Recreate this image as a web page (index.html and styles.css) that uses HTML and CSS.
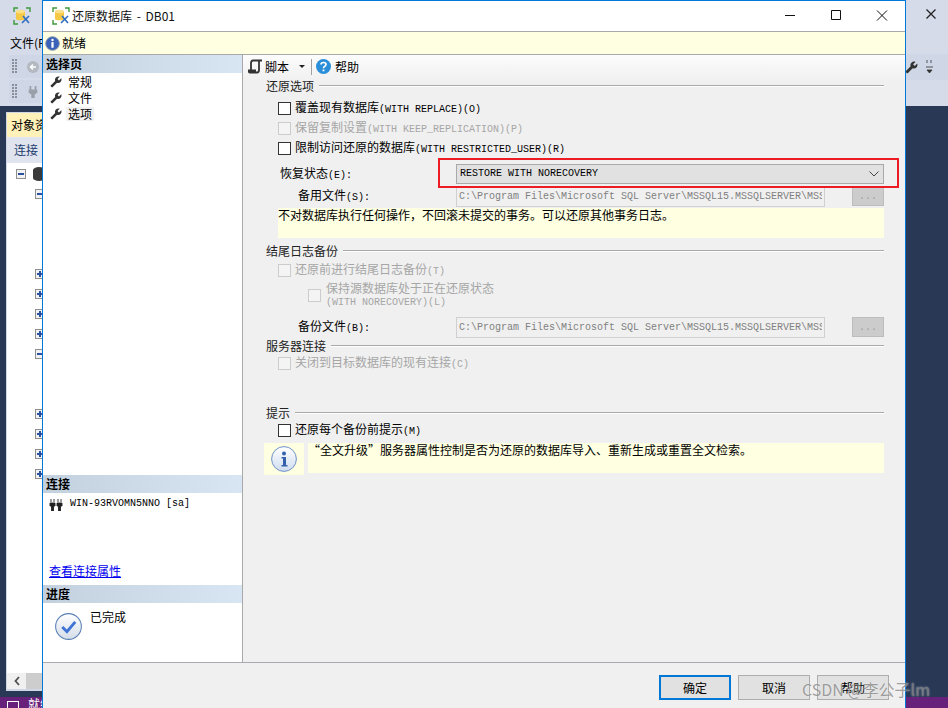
FILE: index.html
```html
<!DOCTYPE html>
<html lang="zh-CN">
<head>
    <meta charset="UTF-8">
    <meta name="viewport" content="width=device-width, initial-scale=1.0">
    <title>还原数据库 - DB01</title>
    <link rel="stylesheet" href="styles.css">
</head>
<body>
    <svg class="defs" width="0" height="0">
        <symbol id="wrench" viewBox="0 0 24 24">
            <path transform="translate(24 0) scale(-1 1)" d="M22.7 19l-9.1-9.1c.9-2.3.4-5-1.5-6.9-2-2-5-2.4-7.4-1.3L9 6 6 9 1.6 4.7C.4 7.1.9 10.1 2.9 12.1c1.9 1.9 4.6 2.4 6.9 1.5l9.1 9.1c.4.4 1 .4 1.4 0l2.3-2.3c.5-.4.5-1.1.1-1.4z"/>
        </symbol>
        <symbol id="logo" viewBox="0 0 18 18">
            <path d="M1 5V1h4M13 1h4v4M1 13v4h4" fill="none" stroke="#3a9a3a" stroke-width="1.4"/>
            <path d="M3 4.500C3 2.800 12 2.800 12 4.500V12C12 13.700 3 13.700 3 12z" fill="#f6c945"/>
            <ellipse cx="7.500" cy="4.500" rx="4.500" ry="1.800" fill="#fbe08a"/>
            <path d="M9 16l7-7M10 9l6 7" stroke="#2f6fc0" stroke-width="1.600"/>
        </symbol>
    </svg>

    <!-- main window behind the dialog -->
    <div class="app">
        <div class="app-top">
            <div class="app-title">
                <svg class="app-logo"><use href="#logo"/></svg>
                <svg class="app-close" viewBox="0 0 10 10"><path d="M0.500 0.500l9 9M9.500 0.500l-9 9"/></svg>
            </div>
            <div class="app-menu">文件(F)</div>
            <div class="app-bar">
                <div class="tile">
                    <span class="grip"></span>
                    <svg class="tile-icon" viewBox="0 0 12 12"><circle cx="6" cy="6" r="6" fill="#b4b8c0"/><path d="M9 6H3.500M6 3.500L3.500 6 6 8.500" fill="none" stroke="#fff" stroke-width="1.500"/></svg>
                </div>
                <div class="tile-right">
                    <svg class="tile-wrench"><use href="#wrench"/></svg>
                    <svg class="tile-more" viewBox="0 0 7 16"><path d="M1 1v3M5 1v3M0 8h7M1 11h5l-2.500 3z" fill="#333" stroke="#333" stroke-width="0.800"/></svg>
                </div>
            </div>
            <div class="app-bar">
                <div class="tile">
                    <span class="grip"></span>
                    <svg class="tile-icon" viewBox="0 0 12 14"><path d="M2 0h2v4h4V0h2v4h1v4l-3 2v4H4v-4L1 8V4h1z" fill="#9aa0aa"/></svg>
                </div>
            </div>
        </div>
        <div class="app-body">
            <div class="explorer">
                <div class="explorer-tab">对象资源管理器</div>
                <div class="explorer-tools">连接</div>
                <div class="tree">
                    <div class="tree-row root"><span class="exp minus"></span><span class="db-icon"></span></div>
                    <div class="tree-row"><span class="exp minus"></span></div>
                    <div class="tree-row"></div>
                    <div class="tree-row"></div>
                    <div class="tree-row"></div>
                    <div class="tree-row"><span class="exp plus"></span></div>
                    <div class="tree-row"><span class="exp plus"></span></div>
                    <div class="tree-row"><span class="exp plus"></span></div>
                    <div class="tree-row"><span class="exp plus"></span></div>
                    <div class="tree-row"><span class="exp minus"></span></div>
                    <div class="tree-row"></div>
                    <div class="tree-row"></div>
                    <div class="tree-row"><span class="exp plus"></span></div>
                    <div class="tree-row"><span class="exp plus"></span></div>
                    <div class="tree-row"><span class="exp plus"></span></div>
                    <div class="tree-row"><span class="exp plus"></span></div>
                </div>
                <div class="hscroll">
                    <svg class="hscroll-arrow" viewBox="0 0 6 10"><path d="M5 1L1.500 5 5 9" fill="none" stroke="#505050" stroke-width="1.800"/></svg>
                    <span class="hscroll-thumb"></span>
                </div>
            </div>
        </div>
        <div class="app-status"><span class="status-box"></span>就绪</div>
    </div>

    <!-- restore dialog -->
    <div class="dialog">
        <div class="titlebar">
            <svg class="title-logo"><use href="#logo"/></svg>
            <span class="title-text">还原数据库 - DB01</span>
            <div class="win-btns">
                <svg class="win-btn" viewBox="0 0 46 30"><path d="M18 14.500h10"/></svg>
                <svg class="win-btn" viewBox="0 0 46 30"><path d="M18.500 9.500h9v9h-9z"/></svg>
                <svg class="win-btn" viewBox="0 0 46 30"><path d="M18 9.500l10 10M28 9.500l-10 10"/></svg>
            </div>
        </div>
        <div class="infobar">
            <svg class="info-small" viewBox="0 0 16 16">
                <circle cx="8" cy="8" r="7.300" fill="#3a62b8" stroke="#8a97ad" stroke-width="1"/>
                <circle cx="8" cy="4.200" r="1.300" fill="#fff"/>
                <rect x="6.800" y="6.500" width="2.400" height="6" fill="#fff"/>
            </svg>
            <span>就绪</span>
        </div>

        <div class="dialog-body">
            <div class="side">
                <div class="side-sec pages">
                    <div class="side-head">选择页</div>
                    <div class="page-list">
                        <div class="page-item"><svg class="wrench"><use href="#wrench"/></svg><span>常规</span></div>
                        <div class="page-item"><svg class="wrench"><use href="#wrench"/></svg><span>文件</span></div>
                        <div class="page-item"><svg class="wrench"><use href="#wrench"/></svg><span class="active">选项</span></div>
                    </div>
                </div>
                <div class="side-sec conn">
                    <div class="side-head">连接</div>
                    <div class="conn-row">
                        <svg class="plug" viewBox="0 0 14 14"><path d="M1 6h5v3H4.500v5h-2V9H1zM8 6h5v3h-1.500v5h-2V9H8zM2 2v3M5 2v3M9 2v3M12 2v3" fill="#222" stroke="#222" stroke-width="0.900"/></svg>
                        <span class="mono">WIN-93RVOMN5NNO [sa]</span>
                    </div>
                    <a class="conn-link" href="#">查看连接属性</a>
                </div>
                <div class="side-sec progress">
                    <div class="side-head">进度</div>
                    <div class="progress-row">
                        <svg class="done-icon" viewBox="0 0 26 26">
                            <defs><linearGradient id="discfill" x1="0" y1="0" x2="0" y2="1"><stop offset="0" stop-color="#fff"/><stop offset="1" stop-color="#d4dde8"/></linearGradient></defs>
                            <circle cx="13" cy="13" r="12.400" fill="url(#discfill)" stroke="#5a7fb5" stroke-width="1"/>
                            <path d="M7 13.500l4.500 4.500L19.500 8.500" fill="none" stroke="#3f73d6" stroke-width="2.800"/>
                        </svg>
                        <span>已完成</span>
                    </div>
                </div>
            </div>

            <div class="pane">
                <div class="toolbar">
                    <svg class="tool-icon" viewBox="0 0 15 15"><path d="M5 1.500h9M5 1.500C3.500 1.500 3 2.500 3 4v7M11 1.500V11c0 1.500-.5 2.500-2 2.500H2C1 13.500 .5 12.800 .5 11.500H8" fill="none" stroke="#333" stroke-width="1.800"/></svg>
                    <span>脚本</span>
                    <span class="caret"></span>
                    <span class="tool-sep"></span>
                    <svg class="tool-icon help" viewBox="0 0 15 15"><circle cx="7.500" cy="7.500" r="7.500" fill="#2a8fd8"/><path d="M5 5.500C5 2.800 10 2.800 10 5.500 10 7.500 7.500 7 7.500 9.200" fill="none" stroke="#fff" stroke-width="1.700"/><rect x="6.600" y="10.500" width="1.800" height="1.800" fill="#fff"/></svg>
                    <span>帮助</span>
                </div>

                <div class="form">
                    <div class="sec-head first"><span>还原选项</span><i></i></div>
                    <label class="chk-row first-row"><input type="checkbox" class="chk"><span>覆盖现有数据库<span class="mono">(WITH REPLACE)(O)</span></span></label>
                    <label class="chk-row off"><input type="checkbox" class="chk" disabled><span>保留复制设置<span class="mono">(WITH KEEP_REPLICATION)(P)</span></span></label>
                    <label class="chk-row"><input type="checkbox" class="chk"><span>限制访问还原的数据库<span class="mono">(WITH RESTRICTED_USER)(R)</span></span></label>

                    <div class="field state-field">
                        <span class="field-label state-label">恢复状态<span class="mono">(E):</span></span>
                        <div class="combo">
                            <span class="mono">RESTORE WITH NORECOVERY</span>
                            <svg class="chevron" viewBox="0 0 10 6"><path d="M0.500 0.500L5 5 9.500 0.500"/></svg>
                        </div>
                    </div>
                    <div class="field file-field">
                        <span class="field-label file-label">备用文件<span class="mono">(S):</span></span>
                        <input class="path-input" type="text" disabled value="C:\Program Files\Microsoft SQL Server\MSSQL15.MSSQLSERVER\MSSQL\Backup">
                        <button class="browse" disabled>...</button>
                    </div>
                    <div class="note state-note">不对数据库执行任何操作，不回滚未提交的事务。可以还原其他事务日志。</div>

                    <div class="sec-head tail"><span>结尾日志备份</span><i></i></div>
                    <label class="chk-row off tail-row"><input type="checkbox" class="chk" disabled><span>还原前进行结尾日志备份<span class="mono">(T)</span></span></label>
                    <label class="chk-row off sub-row"><input type="checkbox" class="chk" disabled><span>保持源数据库处于正在还原状态<br><span class="mono">(WITH NORECOVERY)(L)</span></span></label>
                    <div class="field file-field backup-field">
                        <span class="field-label file-label">备份文件<span class="mono">(B):</span></span>
                        <input class="path-input" type="text" disabled value="C:\Program Files\Microsoft SQL Server\MSSQL15.MSSQLSERVER\MSSQL\Backup">
                        <button class="browse" disabled>...</button>
                    </div>

                    <div class="sec-head server"><span>服务器连接</span><i></i></div>
                    <label class="chk-row off"><input type="checkbox" class="chk" disabled><span>关闭到目标数据库的现有连接<span class="mono">(C)</span></span></label>

                    <div class="sec-head hint"><span>提示</span><i></i></div>
                    <label class="chk-row"><input type="checkbox" class="chk"><span>还原每个备份前提示<span class="mono">(M)</span></span></label>
                    <div class="tip">
                        <div class="tip-icon">
                            <svg viewBox="0 0 26 26">
                                <defs><linearGradient id="tipfill" x1="0" y1="0" x2="0" y2="1"><stop offset="0" stop-color="#fff"/><stop offset="1" stop-color="#cfdcf0"/></linearGradient></defs>
                                <circle cx="13" cy="13" r="12.400" fill="url(#tipfill)" stroke="#6f93c9" stroke-width="1"/>
                                <circle cx="13" cy="7.500" r="2" fill="#3560ad"/>
                                <path d="M10.500 11h4.500v8h1.500v1.500h-6V19H12v-6.500h-1.500z" fill="#3560ad"/>
                            </svg>
                        </div>
                        <div class="note tip-note">“全文升级”服务器属性控制是否为还原的数据库导入、重新生成或重置全文检索。</div>
                    </div>
                </div>
            </div>
        </div>

        <div class="footer">
            <button class="btn primary">确定</button>
            <button class="btn">取消</button>
            <button class="btn">帮助</button>
        </div>

        <div class="redbox"></div>
    </div>

    <div class="watermark">CSDN @李公子lm</div>
</body>
</html>
```
FILE: styles.css
```css
* {
    margin: 0;
    padding: 0;
    box-sizing: border-box;
    font-family: "Noto Sans CJK SC", sans-serif;
}

html, body {
    width: 948px;
    height: 708px;
    overflow: hidden;
}

body {
    position: relative;
    font-size: 12px;
    line-height: 14px;
    color: #000;
    background-color: #293955;
}

.defs {
    position: absolute;
}

.mono {
    font-family: "Liberation Mono", monospace;
    font-size: 10px;
}

/* main window */
.app {
    display: flex;
    flex-direction: column;
    height: 708px;
}

.app-top {
    height: 106px;
    background-color: #d6dbe9;
}

.app-title {
    display: flex;
    justify-content: space-between;
    height: 31px;
    padding: 7px 12px 0 13px;
}

.app-logo {
    width: 18px;
    height: 18px;
}

.app-close {
    width: 10px;
    height: 10px;
    margin-top: 2px;
    stroke: #222;
    stroke-width: 1.3;
}

.app-menu {
    height: 24px;
    padding: 5px 0 0 10px;
}

.app-bar {
    display: flex;
    justify-content: space-between;
    height: 25px;
}

.tile {
    display: flex;
    align-items: center;
    width: 60px;
    height: 23px;
    margin-left: 9px;
    background-color: #cfd6e5;
}

.grip {
    width: 6px;
    height: 15px;
    margin-left: 3px;
    background-image: radial-gradient(circle at 1px 1px, #8a8f9c 1px, transparent 1px);
    background-size: 3px 3px;
}

.tile-icon {
    width: 12px;
    height: 12px;
    margin-left: 9px;
}

.tile-right {
    display: flex;
    align-items: center;
    width: 43px;
    height: 26px;
    margin-top: -1px;
    background-color: #cfd6e5;
}

.tile-wrench {
    width: 13px;
    height: 13px;
    fill: #333;
}

.tile-more {
    width: 7px;
    height: 16px;
    margin-left: 8px;
}

.app-body {
    flex: 1;
    padding: 6px 0 6px 6px;
    background-color: #293955;
}

.explorer {
    display: flex;
    flex-direction: column;
    width: 200px;
    height: 100%;
    padding: 1px 2px 2px 1px;
    background-color: #cfd6e5;
}

.explorer-tab {
    height: 24px;
    padding: 5px 0 0 4px;
    background-color: #fff1b8;
    white-space: nowrap;
}

.explorer-tools {
    height: 26px;
    padding: 6px 0 0 7px;
    color: #1e3c6e;
    background-color: #dfe4ee;
}

.tree {
    flex: 1;
    padding-top: 1px;
    background-color: #fff;
}

.tree-row {
    display: flex;
    align-items: center;
    height: 20px;
    padding-left: 28px;
}

.tree-row.root {
    padding-left: 9px;
}

.exp {
    position: relative;
    display: block;
    width: 10px;
    height: 10px;
    border: 1px solid #8f8f8f;
    background-color: #f2f2f2;
}

.exp::before {
    content: "";
    position: absolute;
    left: 1px;
    top: 3px;
    width: 6px;
    height: 2px;
    background-color: #2a4f9e;
}

.exp.plus::after {
    content: "";
    position: absolute;
    left: 3px;
    top: 1px;
    width: 2px;
    height: 6px;
    background-color: #2a4f9e;
}

.db-icon {
    display: block;
    width: 12px;
    height: 14px;
    margin-left: 7px;
    border-radius: 6px / 3px;
    background-color: #3a3a3a;
}

.hscroll {
    display: flex;
    align-items: center;
    height: 16px;
    background-color: #f0f0f0;
}

.hscroll-arrow {
    width: 6px;
    height: 10px;
    margin-left: 7px;
}

.hscroll-thumb {
    flex: 1;
    height: 16px;
    margin-left: 6px;
    background-color: #cdcdcd;
}

.app-status {
    display: flex;
    height: 11px;
    padding-left: 7px;
    overflow: hidden;
    color: #fff;
    background-color: #68217a;
}

.status-box {
    width: 12px;
    height: 12px;
    margin: 4px 9px 0 0;
    border: 1px solid #fff;
}

/* dialog */
.dialog {
    position: absolute;
    left: 42px;
    top: 0;
    display: flex;
    flex-direction: column;
    width: 864px;
    height: 708px;
    border: 1px solid #0078d7;
    border-bottom: none;
    background-color: #f0f0f0;
}

.titlebar {
    display: flex;
    align-items: center;
    height: 30px;
    padding-left: 9px;
    background-color: #fff;
}

.title-logo {
    width: 18px;
    height: 18px;
}

.title-text {
    margin-left: 2px;
    word-spacing: 2px;
    color: #111;
}

.win-btns {
    display: flex;
    margin-left: auto;
}

.win-btn {
    width: 46px;
    height: 30px;
    fill: none;
    stroke: #111;
    stroke-width: 1;
}

.infobar {
    display: flex;
    align-items: center;
    height: 24px;
    padding-left: 2px;
    border-top: 1px solid #a9a9a9;
    border-bottom: 1px solid #a9a9a9;
    background-color: #ffffe1;
}

.info-small {
    width: 15px;
    height: 15px;
    margin-right: 2px;
}

.dialog-body {
    display: flex;
    height: 607px;
}

.side {
    display: flex;
    flex-direction: column;
    width: 200px;
    border-right: 1px solid #a9a9a9;
    background-color: #fff;
}

.side-head {
    height: 18px;
    padding: 2px 0 0 3px;
    font-weight: bold;
    background: linear-gradient(to right, #c3d0de, #d8e5f2);
}

.side-sec.pages {
    height: 420px;
}

.side-sec.conn {
    display: flex;
    flex-direction: column;
    height: 110px;
}

.side-sec.progress {
    flex: 1;
}

.page-list {
    padding: 1px 0 0 7px;
}

.page-item {
    display: flex;
    align-items: center;
    height: 16px;
}

.page-item span {
    padding: 0 2px;
}

.page-item .active {
    background-color: #f0f0f0;
}

.wrench {
    width: 12px;
    height: 12px;
    margin-right: 4px;
    fill: #333;
}

.conn-row {
    display: flex;
    align-items: center;
    padding: 4px 0 0 6px;
}

.plug {
    width: 14px;
    height: 14px;
    margin-right: 7px;
}

.conn-link {
    margin: auto 0 7px 6px;
    color: #0000ee;
}

.progress-row {
    display: flex;
    padding: 7px 0 0 12px;
}

.done-icon {
    width: 27px;
    height: 27px;
    margin-top: 3px;
    margin-right: 8px;
}

.pane {
    flex: 1;
}

.toolbar {
    display: flex;
    align-items: center;
    height: 26px;
    padding: 0 0 3px 5px;
    background: linear-gradient(to bottom, #fcfcfc, #f0f0f0);
}

.tool-icon {
    width: 15px;
    height: 15px;
    margin-right: 2px;
}

.tool-icon.help {
    margin-right: 4px;
}

.caret {
    width: 0;
    height: 0;
    margin-left: 10px;
    border-style: solid;
    border-width: 3px 3px 0 3px;
    border-color: #222 transparent transparent transparent;
}

.tool-sep {
    width: 1px;
    height: 16px;
    margin: 0 4px 0 6px;
    background-color: #a0a0a0;
}

.form {
    padding: 0 21px 0 23px;
}

.sec-head {
    display: flex;
    height: 14px;
    color: #222;
}

.sec-head span {
    margin-right: 5px;
}

.sec-head i {
    flex: 1;
    height: 1px;
    margin-top: 6px;
    background-color: #a9a9a9;
    box-shadow: 0 1px 0 #fff;
}

.sec-head.first {
    margin-top: -2px;
}

.sec-head.tail {
    margin-top: 6px;
}

.sec-head.server {
    margin-top: 1px;
}

.sec-head.hint {
    margin-top: 33px;
}

.chk-row {
    display: flex;
    align-items: center;
    gap: 4px;
    height: 20px;
    padding-left: 12px;
}

.chk-row.first-row {
    margin-top: 5px;
}

.chk-row.off {
    color: #a6a6a6;
}

.chk-row.tail-row {
    margin-top: 2px;
}

.chk-row.sub-row {
    gap: 5px;
    height: 24px;
    margin-top: 3px;
    padding-left: 42px;
    line-height: 12px;
}

.chk {
    flex: none;
    width: 13px;
    height: 13px;
    appearance: none;
    border: 1px solid #333;
    background-color: #fff;
}

.chk:disabled {
    border-color: #cccccc;
    background-color: #f4f4f4;
}

.field {
    display: flex;
    align-items: flex-start;
}

.field-label {
    flex: none;
}

.state-field {
    margin-top: 6px;
    padding-left: 14px;
}

.state-label {
    width: 176px;
    padding-top: 2px;
}

.combo {
    display: flex;
    align-items: center;
    justify-content: space-between;
    flex: 1;
    height: 20px;
    padding: 0 4px 0 3px;
    border: 1px solid #a9a9a9;
    background-color: #e1e1e1;
}

.chevron {
    width: 10px;
    height: 6px;
    fill: none;
    stroke: #444;
    stroke-width: 1;
}

.file-field {
    margin-top: 2px;
    padding-left: 32px;
}

.file-label {
    width: 158px;
    padding-top: 2px;
}

.path-input {
    width: 369px;
    height: 21px;
    padding: 0 2px;
    border: 1px solid #d0d0d0;
    font-family: "Liberation Mono", monospace;
    font-size: 10px;
    color: #808080;
    background-color: #f0f0f0;
}

.browse {
    width: 32px;
    height: 20px;
    margin-left: 27px;
    border: 1px solid #bdbdbd;
    font-family: "Liberation Mono", monospace;
    font-size: 10px;
    color: #a0a0a0;
    background-color: #cccccc;
}

.backup-field {
    margin-top: 10px;
}

.note {
    background-color: #ffffe1;
}

.state-note {
    height: 30px;
    margin: 1px 0 0 12px;
}

.tip {
    display: flex;
    margin: 3px 0 0 -2px;
}

.tip-icon {
    display: flex;
    align-items: center;
    justify-content: center;
    width: 40px;
    height: 32px;
    background-color: #ffffe1;
}

.tip-icon svg {
    width: 26px;
    height: 26px;
}

.tip-note {
    flex: 1;
    height: 30px;
    margin-left: 4px;
}

.footer {
    display: flex;
    justify-content: flex-end;
    gap: 7px;
    flex: 1;
    padding: 12px 16px 0 0;
    border-top: 1px solid #a9a9b0;
}

.btn {
    width: 72px;
    height: 25px;
    border: 1px solid #adadad;
    font-size: 12px;
    color: #000;
    background-color: #e1e1e1;
}

.btn.primary {
    border: 2px solid #0078d7;
}

.redbox {
    position: absolute;
    left: 395px;
    top: 157px;
    width: 461px;
    height: 30px;
    border: 2px solid #ed1c24;
}

.watermark {
    position: absolute;
    left: 802px;
    top: 678px;
    font-size: 16px;
    line-height: 22px;
    white-space: nowrap;
    color: rgba(120, 120, 120, 0.7);
    text-shadow: 0 0 2px rgba(255, 255, 255, 0.6);
}
```
